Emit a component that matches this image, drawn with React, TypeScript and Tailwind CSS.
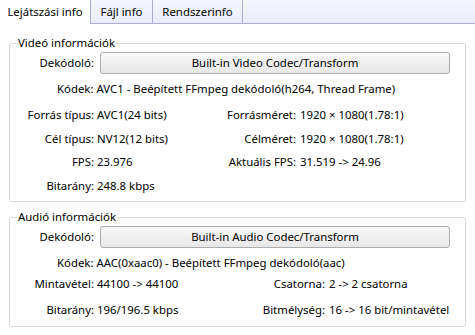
import React from "react";

function Row({
  cols,
  l1,
  v1,
  l2,
  v2,
  className = "",
}: {
  cols: string;
  l1: string;
  v1: string;
  l2?: string;
  v2?: string;
  className?: string;
}) {
  return (
    <div className={`grid ${cols} h-[16px] leading-[16px] whitespace-nowrap ${className}`}>
      <div className="flex justify-end">{l1}</div>
      <div className="pl-[3px]">{v1}</div>
      <div className="flex justify-end">{l2 ?? ""}</div>
      <div className="pl-[4px]">{v2 ?? ""}</div>
    </div>
  );
}

function DecoderRow({ label }: { label: string }) {
  return (
    <div className="flex items-center mt-[1px] h-[22px]">
      <div className="w-[84px] flex justify-end leading-[16px]">Dekódoló:</div>
      <button className="ml-[6px] w-[350px] h-[22px] border border-[#adadad] rounded-[3px] bg-gradient-to-b from-[#f8f8f8] to-[#e8e8e8] text-center leading-[20px] text-[11.4px] text-black">
        {label}
      </button>
    </div>
  );
}

export default function App() {
  const vcols = "grid-cols-[84px_110px_92px_1fr]";
  const acols = "grid-cols-[84px_150px_81px_1fr]";
  return (
    <div className="w-[475px] h-[335px] bg-white overflow-hidden text-[11.4px] text-black font-['Segoe_UI','Noto_Sans',sans-serif]">
      {/* Tab strip */}
      <div className="flex h-[24px] bg-gradient-to-b from-[#f6f7fe] to-[#eaecfa]">
        <div className="w-[91px] h-full bg-white border-r border-[#a9aed4] flex items-center justify-center leading-[16px]">
          Lejátszási info
        </div>
        <div className="w-[62px] h-full border-r border-b border-[#a9aed4] flex items-center justify-center leading-[16px]">
          Fájl info
        </div>
        <div className="w-[90px] h-full border-r border-b border-[#a9aed4] flex items-center justify-center leading-[16px]">
          Rendszerinfo
        </div>
        <div className="flex-1 h-full border-b border-[#a9aed4]" />
      </div>

      {/* Video group */}
      <fieldset className="mx-[9px] mt-[11px] border border-[#d9d9d9] rounded-[2px] pb-[7px]">
        <legend className="ml-[7px] px-[1px] leading-[16px]">Videó információk</legend>
        <DecoderRow label="Built-in Video Codec/Transform" />
        <div className="mt-[7px] pl-[47px] h-[16px] leading-[16px] whitespace-nowrap">
          Kódek: AVC1 - Beépített FFmpeg dekódoló(h264, Thread Frame)
        </div>
        <Row
          cols={vcols}
          className="mt-[10px]"
          l1="Forrás típus:"
          v1="AVC1(24 bits)"
          l2="Forrásméret:"
          v2="1920 × 1080(1.78:1)"
        />
        <Row
          cols={vcols}
          className="mt-[8px]"
          l1="Cél típus:"
          v1="NV12(12 bits)"
          l2="Célméret:"
          v2="1920 × 1080(1.78:1)"
        />
        <Row
          cols={vcols}
          className="mt-[7px]"
          l1="FPS:"
          v1="23.976"
          l2="Aktuális FPS:"
          v2="31.519 -> 24.96"
        />
        <Row cols={vcols} className="mt-[8px]" l1="Bitarány:" v1="248.8 kbps" />
      </fieldset>

      {/* Audio group */}
      <fieldset className="mx-[9px] mt-[7px] border border-[#d9d9d9] rounded-[2px] pb-[8px]">
        <legend className="ml-[7px] px-[1px] leading-[16px]">Audió információk</legend>
        <DecoderRow label="Built-in Audio Codec/Transform" />
        <div className="mt-[7px] pl-[47px] h-[16px] leading-[16px] whitespace-nowrap">
          Kódek: AAC(0xaac0) - Beépített FFmpeg dekódoló(aac)
        </div>
        <Row
          cols={acols}
          className="mt-[5px]"
          l1="Mintavétel:"
          v1="44100 -> 44100"
          l2="Csatorna:"
          v2="2 -> 2 csatorna"
        />
        <Row
          cols={acols}
          className="mt-[10px]"
          l1="Bitarány:"
          v1="196/196.5 kbps"
          l2="Bitmélység:"
          v2="16 -> 16 bit/mintavétel"
        />
      </fieldset>
    </div>
  );
}
